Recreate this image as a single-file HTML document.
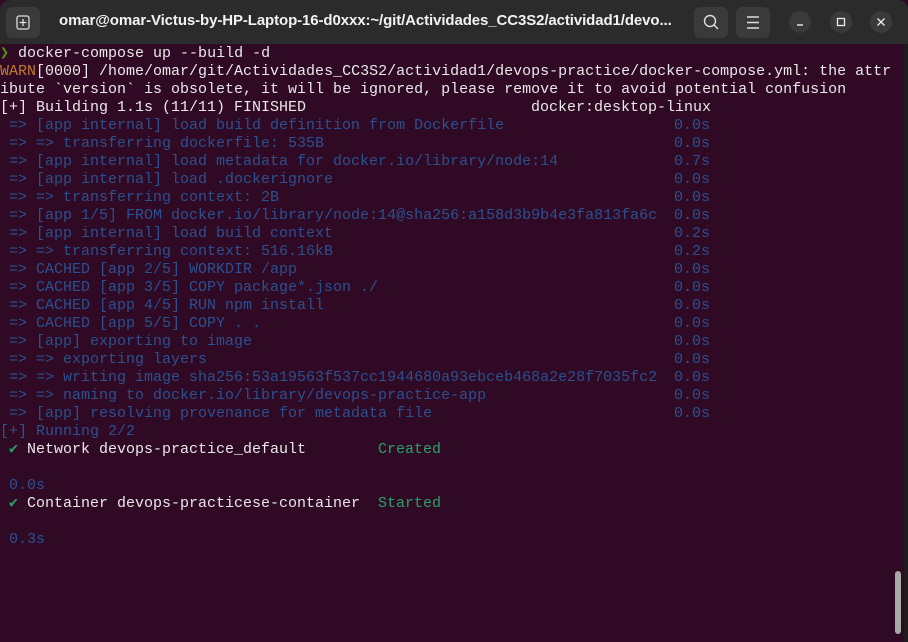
<!DOCTYPE html>
<html><head><style>
html,body{margin:0;padding:0;width:908px;height:642px;overflow:hidden;background:#300a24;}
.bar{position:absolute;left:0;top:0;width:908px;height:44px;background:#2b2b2b;border-radius:10px 10px 0 0;}
.title{position:absolute;left:59px;top:12px;font:bold 15px "Liberation Sans",sans-serif;color:#f2f2f2;white-space:nowrap;letter-spacing:-0.1px}
.btn{position:absolute;top:7px;width:34px;height:31px;background:#3a3a3a;border-radius:6px;}
.circ{position:absolute;top:11px;width:22px;height:22px;background:#3a3a3a;border-radius:50%;}
.term{position:absolute;left:0;top:45px;font:15px/18px "Liberation Mono",monospace;color:#e8e8e8;width:908px}
.l{position:relative;height:18px;white-space:pre}
.t{position:absolute;left:674px;top:0}
.s{position:absolute;left:378px;top:0}
.b{color:#2a5090}.w{color:#c17a2a}.g{color:#26a269}.p{color:#4e9a06;font-weight:bold}
.rb{position:absolute;right:0;top:44px;width:4px;height:598px;background:#1c1c1c;}
.sb{position:absolute;left:895px;top:571px;width:6px;height:63px;background:#a8a8a8;border-radius:3px;}
</style></head><body>
<div class="bar">
<div class="btn" style="left:6px"><svg width="34" height="31"><rect x="11" y="9" width="12" height="13" rx="2" fill="none" stroke="#ddd" stroke-width="1.3"/><path d="M17 12v7M13.5 15.5h7" stroke="#ddd" stroke-width="1.3"/></svg></div>
<div class="title">omar@omar-Victus-by-HP-Laptop-16-d0xxx:~/git/Actividades_CC3S2/actividad1/devo...</div>
<div class="btn" style="left:694px"><svg width="34" height="31"><circle cx="16" cy="14" r="5.5" fill="none" stroke="#ddd" stroke-width="1.4"/><path d="M20 18l4 4" stroke="#ddd" stroke-width="1.4"/></svg></div>
<div class="btn" style="left:736px"><svg width="34" height="31"><path d="M11 10h12M11 15.5h12M11 21h12" stroke="#ddd" stroke-width="1.4"/></svg></div>
<div class="circ" style="left:789px"><svg width="22" height="22"><path d="M8 14h6" stroke="#eee" stroke-width="1.4"/></svg></div>
<div class="circ" style="left:830px"><svg width="22" height="22"><rect x="7.5" y="7.5" width="7" height="7" fill="none" stroke="#eee" stroke-width="1.3"/></svg></div>
<div class="circ" style="left:870px"><svg width="22" height="22"><path d="M7.5 7.5l7 7M14.5 7.5l-7 7" stroke="#eee" stroke-width="1.3"/></svg></div>
</div>
<div class="term">
<div class="l"><span class="p">❯</span> docker-compose up --build -d</div>
<div class="l"><span class="w">WARN</span>[0000] /home/omar/git/Actividades_CC3S2/actividad1/devops-practice/docker-compose.yml: the attr</div>
<div class="l">ibute `version` is obsolete, it will be ignored, please remove it to avoid potential confusion</div>
<div class="l">[+] Building 1.1s (11/11) FINISHED<span style="position:absolute;left:531px">docker:desktop-linux</span></div>
<div class="b">
<div class="l"> =&gt; [app internal] load build definition from Dockerfile<span class="t">0.0s</span></div>
<div class="l"> =&gt; =&gt; transferring dockerfile: 535B<span class="t">0.0s</span></div>
<div class="l"> =&gt; [app internal] load metadata for docker.io/library/node:14<span class="t">0.7s</span></div>
<div class="l"> =&gt; [app internal] load .dockerignore<span class="t">0.0s</span></div>
<div class="l"> =&gt; =&gt; transferring context: 2B<span class="t">0.0s</span></div>
<div class="l"> =&gt; [app 1/5] FROM docker.io/library/node:14@sha256:a158d3b9b4e3fa813fa6c<span class="t">0.0s</span></div>
<div class="l"> =&gt; [app internal] load build context<span class="t">0.2s</span></div>
<div class="l"> =&gt; =&gt; transferring context: 516.16kB<span class="t">0.2s</span></div>
<div class="l"> =&gt; CACHED [app 2/5] WORKDIR /app<span class="t">0.0s</span></div>
<div class="l"> =&gt; CACHED [app 3/5] COPY package*.json ./<span class="t">0.0s</span></div>
<div class="l"> =&gt; CACHED [app 4/5] RUN npm install<span class="t">0.0s</span></div>
<div class="l"> =&gt; CACHED [app 5/5] COPY . .<span class="t">0.0s</span></div>
<div class="l"> =&gt; [app] exporting to image<span class="t">0.0s</span></div>
<div class="l"> =&gt; =&gt; exporting layers<span class="t">0.0s</span></div>
<div class="l"> =&gt; =&gt; writing image sha256:53a19563f537cc1944680a93ebceb468a2e28f7035fc2<span class="t">0.0s</span></div>
<div class="l"> =&gt; =&gt; naming to docker.io/library/devops-practice-app<span class="t">0.0s</span></div>
<div class="l"> =&gt; [app] resolving provenance for metadata file<span class="t">0.0s</span></div>
<div class="l">[+] Running 2/2</div>
</div>
<div class="l"><span class="g" style="position:absolute;left:9px">✔</span><span style="position:absolute;left:27px">Network devops-practice_default</span><span class="s g">Created</span></div>
<div class="l"></div>
<div class="l b"> 0.0s</div>
<div class="l"><span class="g" style="position:absolute;left:9px">✔</span><span style="position:absolute;left:27px">Container devops-practicese-container</span><span class="s g">Started</span></div>
<div class="l"></div>
<div class="l b"> 0.3s</div>
</div>
<div class="rb"></div>
<div class="sb"></div>
</body></html>
